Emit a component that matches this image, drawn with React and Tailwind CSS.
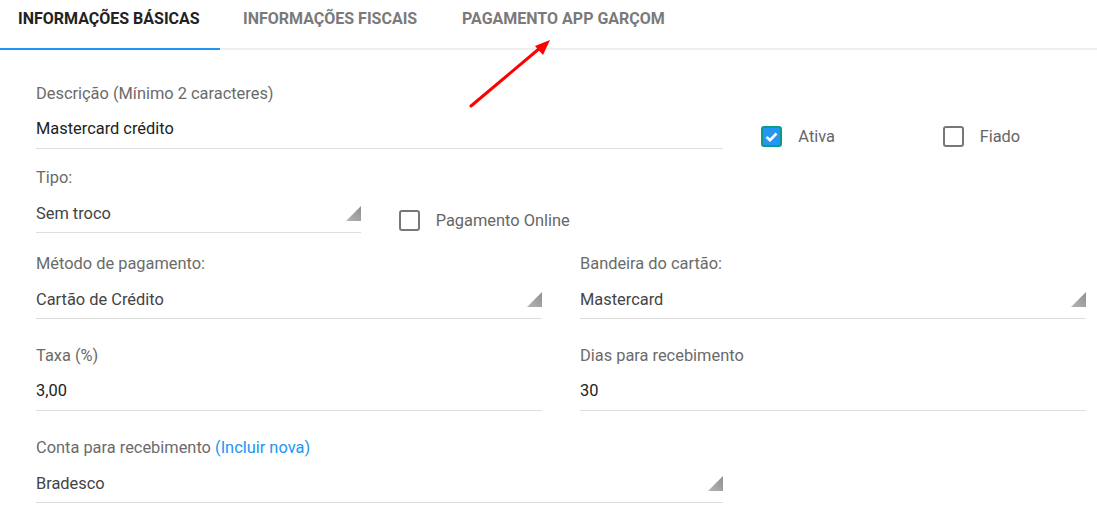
import React from "react";

const Tri = () => (
  <svg width="15" height="15" viewBox="0 0 15 15" className="absolute right-0 bottom-[11px]">
    <defs>
      <linearGradient id="g" x1="0" y1="1" x2="1" y2="0">
        <stop offset="0" stopColor="#b5b5b5" />
        <stop offset="1" stopColor="#8f8f8f" />
      </linearGradient>
    </defs>
    <polygon points="15,0 15,15 0,15" fill="url(#g)" />
  </svg>
);

const Field = ({ label, value, select, dark, span, extra }) => (
  <div className={span}>
    <div className="text-[16.4px] leading-[20px] text-[#6b6b6b]">
      {label}
      {extra}
    </div>
    <div className={"relative mt-[4px] h-[41px] border-b border-[#dedede] flex items-center " + (select ? "pt-[4px]" : "pt-[1px]")}>
      <span className={"text-[16.4px] leading-[20px] " + (dark ? "text-[#222]" : "text-[#444]")}>
        {value}
      </span>
      {select && <Tri />}
    </div>
  </div>
);

const Check = ({ checked, label, span }) => (
  <div className={span + " flex items-end pb-[2px]"}>
    <div className="flex items-center">
      {checked ? (
        <div className="w-[21px] h-[21px] rounded-[3px] border-2 border-[#0e9a8a] bg-[#2196f3] flex items-center justify-center">
          <svg width="13" height="10" viewBox="0 0 13 10">
            <path d="M1.5 5 L5 8.2 L11.5 1.5" stroke="#fff" strokeWidth="2.6" fill="none" />
          </svg>
        </div>
      ) : (
        <div className="w-[21px] h-[21px] rounded-[3px] border-2 border-[#777]" />
      )}
      <span className="ml-[16px] text-[16.4px] leading-[20px] text-[#666]">{label}</span>
    </div>
  </div>
);

export default function App() {
  return (
    <div className="relative w-[1097px] h-[514px] bg-white overflow-hidden" style={{ fontFamily: "Roboto, 'Liberation Sans', sans-serif" }}>
      <div className="flex h-[50px] border-b-2 border-[#eeeeee]">
        <div className="w-[220px] pl-[18px] pt-[9px] text-[16px] leading-[20px] font-bold text-[#222] border-b-2 border-[#2196f3] -mb-[2px]">
          INFORMAÇÕES BÁSICAS
        </div>
        <div className="w-[242px] pl-[23px] pt-[9px] text-[16px] leading-[20px] font-bold text-[#7a7a7a]">
          INFORMAÇÕES FISCAIS
        </div>
        <div className="pt-[9px] text-[16px] leading-[20px] font-bold text-[#7a7a7a]">
          PAGAMENTO APP GARÇOM
        </div>
      </div>

      <div className="pl-[36px] pr-[11px] pt-[34px]">
        <div className="grid grid-cols-12 gap-x-[38px]">
          <Field span="col-span-8" label="Descrição (Mínimo 2 caracteres)" value="Mastercard crédito" dark />
          <Check span="col-span-2" checked label="Ativa" />
          <Check span="col-span-2" label="Fiado" />
        </div>
        <div className="grid grid-cols-12 gap-x-[38px] mt-[19px]">
          <Field span="col-span-4" label="Tipo:" value="Sem troco" select />
          <Check span="col-span-4" label="Pagamento Online" />
        </div>
        <div className="grid grid-cols-12 gap-x-[38px] mt-[21px]">
          <Field span="col-span-6" label="Método de pagamento:" value="Cartão de Crédito" select />
          <Field span="col-span-6" label="Bandeira do cartão:" value="Mastercard" select />
        </div>
        <div className="grid grid-cols-12 gap-x-[38px] mt-[27px]">
          <Field span="col-span-6" label="Taxa (%)" value="3,00" dark />
          <Field span="col-span-6" label="Dias para recebimento" value="30" dark />
        </div>
        <div className="grid grid-cols-12 gap-x-[38px] mt-[27px]">
          <Field
            span="col-span-8"
            label="Conta para recebimento "
            extra={<span className="text-[#2196f3]">(Incluir nova)</span>}
            value="Bradesco"
            select
          />
        </div>
      </div>

      <svg className="absolute left-0 top-0 pointer-events-none" width="1097" height="514">
        <line x1="471" y1="106" x2="540" y2="48" stroke="#ff0000" strokeWidth="3" strokeLinecap="round" />
        <polygon points="550,40 535,46 543,55" fill="#ff0000" />
      </svg>
    </div>
  );
}
